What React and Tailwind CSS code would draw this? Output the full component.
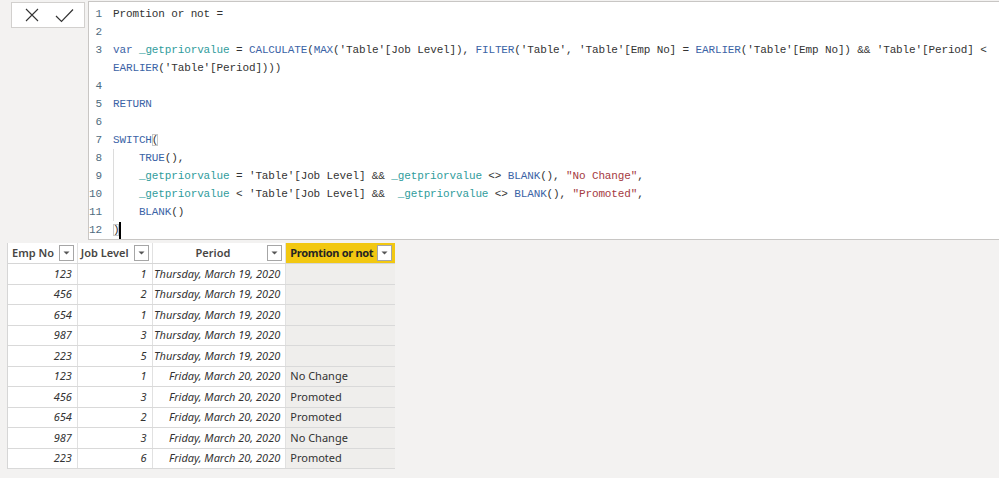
import React from "react";

const F = ({ children }) => <span className="text-[#3b63a6]">{children}</span>;
const V = ({ children }) => <span className="text-[#2f9c9c]">{children}</span>;
const S = ({ children }) => <span className="text-[#a53a3f]">{children}</span>;
const B = ({ children }) => (
  <span className="outline outline-1 outline-[#c8c8c8] -outline-offset-1">{children}</span>
);

const codeLines = [
  { n: "1", c: <>Promtion or not =</> },
  { n: "2", c: <>&nbsp;</> },
  {
    n: "3",
    c: (
      <>
        <F>var</F> <V>_getpriorvalue</V> = <F>CALCULATE</F>(<F>MAX</F>('Table'[Job Level]), <F>FILTER</F>('Table', 'Table'[Emp No] = <F>EARLIER</F>('Table'[Emp No]) &amp;&amp; 'Table'[Period] &lt;
      </>
    ),
  },
  { n: "", c: <><F>EARLIER</F>('Table'[Period])))</> },
  { n: "4", c: <>&nbsp;</> },
  { n: "5", c: <F>RETURN</F> },
  { n: "6", c: <>&nbsp;</> },
  { n: "7", c: <><F>SWITCH</F><B>(</B></> },
  { n: "8", c: <>{"    "}<F>TRUE</F>(),</> },
  {
    n: "9",
    c: (
      <>
        {"    "}<V>_getpriorvalue</V> = 'Table'[Job Level] &amp;&amp; <V>_getpriorvalue</V> &lt;&gt; <F>BLANK</F>(), <S>"No Change"</S>,
      </>
    ),
  },
  {
    n: "10",
    c: (
      <>
        {"    "}<V>_getpriorvalue</V> &lt; 'Table'[Job Level] &amp;&amp;  <V>_getpriorvalue</V> &lt;&gt; <F>BLANK</F>(), <S>"Promoted"</S>,
      </>
    ),
  },
  { n: "11", c: <>{"    "}<F>BLANK</F>()</> },
  {
    n: "12",
    c: (
      <span className="relative">
        <B>)</B>
        <span className="absolute left-[6px] top-[-2px] w-[2px] h-[17px] bg-black" />
      </span>
    ),
  },
];

const Drop = () => (
  <div className="w-[15px] h-[16px] bg-white border border-[#a6a6a6] flex items-center justify-center shrink-0">
    <svg width="7" height="4" viewBox="0 0 7 4">
      <path d="M0.5 0.5 L6.5 0.5 L3.5 3.5 Z" fill="#555" />
    </svg>
  </div>
);

const rows = [
  ["123", "1", "Thursday, March 19, 2020", ""],
  ["456", "2", "Thursday, March 19, 2020", ""],
  ["654", "1", "Thursday, March 19, 2020", ""],
  ["987", "3", "Thursday, March 19, 2020", ""],
  ["223", "5", "Thursday, March 19, 2020", ""],
  ["123", "1", "Friday, March 20, 2020", "No Change"],
  ["456", "3", "Friday, March 20, 2020", "Promoted"],
  ["654", "2", "Friday, March 20, 2020", "Promoted"],
  ["987", "3", "Friday, March 20, 2020", "No Change"],
  ["223", "6", "Friday, March 20, 2020", "Promoted"],
];

const uiFont = { fontFamily: '"Noto Sans", "Open Sans", sans-serif' };

export default function App() {
  return (
    <div className="w-[999px] h-[478px] bg-[#f3f2f1] overflow-hidden relative">
      {/* formula bar */}
      <div className="flex pt-[1px] h-[240px]">
        <div className="w-[88px] shrink-0 pl-[11px] pt-[1px]">
          <div className="w-[74px] h-[26px] bg-white border border-[#d2d0ce] flex items-center">
            <svg width="14" height="14" viewBox="0 0 14 14" className="ml-[13px]">
              <path d="M1 1 L13 13 M13 1 L1 13" stroke="#333" strokeWidth="1.1" fill="none" />
            </svg>
            <svg width="19" height="15" viewBox="0 0 19 15" className="ml-[16px]">
              <path d="M1 8 L6.5 13.5 L18 1.5" stroke="#333" strokeWidth="1.2" fill="none" />
            </svg>
          </div>
        </div>
        <div className="flex-1 bg-white border-l border-t border-b border-[#c8c6c4] pt-[3px] relative">
          <div className="absolute left-[24px] top-[147px] w-px h-[72px] bg-[#dcdcdc]" />
          {codeLines.map((l, i) => (
            <div
              key={i}
              className="flex h-[18px] items-center whitespace-pre text-[11px] tracking-[-0.13px] text-[#333]"
              style={{ fontFamily: '"Liberation Mono", "DejaVu Sans Mono", monospace' }}
            >
              <div className="w-[13px] text-right text-[#4e6b7e] shrink-0">{l.n}</div>
              <div className="ml-[11px]">{l.c}</div>
            </div>
          ))}
        </div>
      </div>

      {/* table */}
      <div className="pl-[7px] pt-[3px]" style={uiFont}>
        <div className="w-[388px] border-l border-[#d6d6d6]">
          <div className="flex h-[21px] text-[11px] font-semibold text-[#484644] border-b border-[#d6d6d6] whitespace-nowrap">
            <div className="w-[70px] bg-white border-r border-[#e1e1e1] flex items-center pl-[4px] pr-[3px]">
              <span className="flex-1">Emp No</span>
              <Drop />
            </div>
            <div className="w-[75px] bg-white border-r border-[#e1e1e1] flex items-center pl-[3px] pr-[3px]">
              <span className="flex-1">Job Level</span>
              <Drop />
            </div>
            <div className="w-[134px] bg-white border-r border-[#e1e1e1] flex items-center pr-[3px]">
              <span className="flex-1 text-center pl-[6px]">Period</span>
              <Drop />
            </div>
            <div className="w-[109px] bg-[#f2c811] flex items-center pl-[4px] pr-[3px] text-[#252423] font-bold">
              <span className="flex-1 tracking-[-0.3px] overflow-hidden">Promtion or not</span>
              <Drop />
            </div>
          </div>
          {rows.map((r, i) => (
            <div
              key={i}
              className="flex h-[20.5px] text-[11px] text-[#333] border-b border-[#d9d9d9]"
            >
              <div className="w-[70px] bg-white border-r border-[#e1e1e1] flex items-center justify-end pr-[5px] italic">
                {r[0]}
              </div>
              <div className="w-[75px] bg-white border-r border-[#e1e1e1] flex items-center justify-end pr-[5px] italic">
                {r[1]}
              </div>
              <div className="w-[134px] bg-white border-r border-[#e1e1e1] flex items-center justify-end pr-[5px] italic">
                {r[2]}
              </div>
              <div className="w-[109px] bg-[#efeeec] flex items-center pl-[4px]">{r[3]}</div>
            </div>
          ))}
        </div>
      </div>
    </div>
  );
}
